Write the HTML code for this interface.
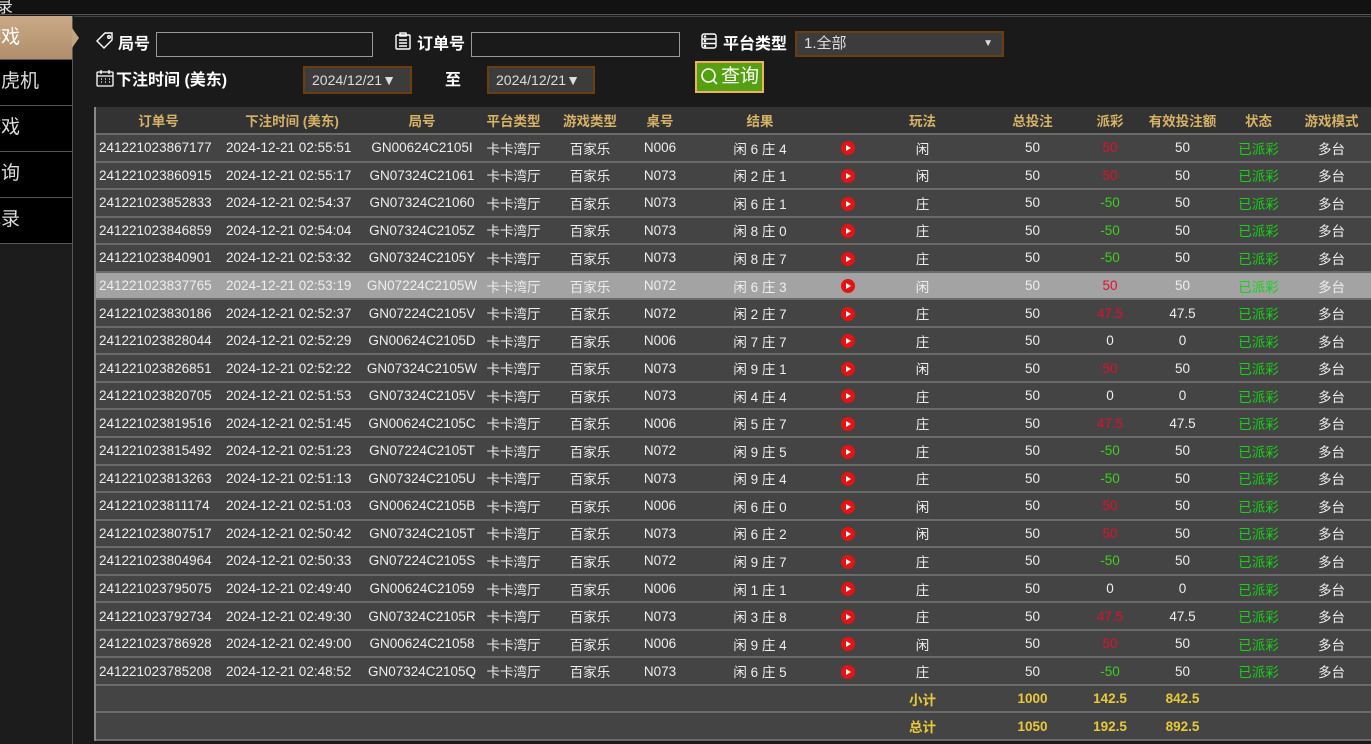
<!DOCTYPE html>
<html><head><meta charset="utf-8"><style>
*{margin:0;padding:0;box-sizing:border-box}
body{width:1371px;height:744px;overflow:hidden;background:#1a1a1a;font-family:"Liberation Sans","Noto Sans CJK SC",sans-serif;color:#fff;position:relative}
.top{position:absolute;left:0;top:0;width:1371px;height:15px;background:#121212;border-bottom:1px solid #555;overflow:hidden}
.side{position:absolute;left:0;top:16px;width:73px;height:728px;background:#1c1c1c;border-right:1px solid #555}
.nav{position:absolute;left:0;width:72px;height:46px;background:#000;border-bottom:1px solid #555;color:#ddd;font-size:19px;line-height:44px;overflow:hidden;white-space:nowrap}
.nav span{position:absolute;left:-18px}
.nav.act{background:linear-gradient(#c9a986,#b08e6c);color:#fff}
.lbl{position:absolute;font-weight:bold;font-size:16px;color:#fff}
.inp{position:absolute;height:25px;border:1px solid #999;background:#1a1a1a}
.dsel{position:absolute;height:28px;border:2px solid #6b3e12;background:#3c3c3c;color:#ddd;font-size:14px;line-height:24px;padding-left:7px}
table{position:absolute;left:95px;top:107px;width:1276px;border-collapse:collapse;font-size:13.5px;table-layout:fixed}
td,th{height:27.55px;border-bottom:2px solid #6a6a6a;text-align:center;white-space:nowrap;overflow:hidden;padding:0}
th{background:#333;color:#d6b266;font-weight:bold;font-size:13.5px;height:27px}
tr{background:#444;color:#eee}
tr.h{background:#a3a3a3}
td.l{text-align:left;padding-left:4px}
.r{color:#e0102a}.g{color:#3ecf1e}.s{color:#16d216}
.y td{color:#e8c93a;font-weight:bold}
.pl{display:inline-block;width:14px;height:14px;border-radius:50%;background:#e51313;position:relative;vertical-align:middle}
.pl:after{content:"";position:absolute;left:5px;top:4px;border-left:5px solid #fff;border-top:3px solid transparent;border-bottom:3px solid transparent}
</style></head><body>
<div class="top"><span style="position:absolute;left:-4px;top:-8px;font-size:17px;color:#ddd">录</span></div>
<div class="side">
<div class="nav act" style="top:0;height:44px"><span>游戏</span></div>
<div style="position:absolute;left:72px;top:12px;border-left:7px solid #c4a380;border-top:10px solid transparent;border-bottom:10px solid transparent"></div>
<div class="nav" style="top:44px"><span>老虎机</span></div>
<div class="nav" style="top:90px"><span>游戏</span></div>
<div class="nav" style="top:136px"><span>查询</span></div>
<div class="nav" style="top:182px"><span>记录</span></div>
</div>
<div style="position:absolute;left:74px;top:16px;right:0;height:1px;background:#444"></div>
<svg style="position:absolute;left:95px;top:31px" width="20" height="20" viewBox="0 0 20 20" fill="none" stroke="#fff" stroke-width="1.4"><path d="M10 2h7v7l-8 8-7-7z"/><circle cx="14" cy="6" r="1.3"/></svg>
<div class="lbl" style="left:118px;top:30px">局号</div>
<div class="inp" style="left:156px;top:32px;width:217px"></div>
<svg style="position:absolute;left:393px;top:31px" width="20" height="20" viewBox="0 0 20 20" fill="none" stroke="#fff" stroke-width="1.4"><rect x="3" y="4" width="14" height="14" rx="1"/><rect x="7" y="2" width="6" height="3"/><path d="M6 9h8M6 12h8M6 15h8"/></svg>
<div class="lbl" style="left:417px;top:30px">订单号</div>
<div class="inp" style="left:471px;top:32px;width:209px"></div>
<svg style="position:absolute;left:699px;top:31px" width="20" height="20" viewBox="0 0 20 20" fill="none" stroke="#fff" stroke-width="1.4"><rect x="3" y="3" width="14" height="14" rx="2"/><path d="M3 8h14M3 12.5h14"/><circle cx="6" cy="5.5" r=".6"/><circle cx="6" cy="10" r=".6"/><circle cx="6" cy="15" r=".6"/></svg>
<div class="lbl" style="left:723px;top:30px">平台类型</div>
<div class="dsel" style="left:795px;top:31px;width:209px;height:26px;line-height:22px;font-size:15px">1.全部<span style="position:absolute;right:9px;font-size:10px">▼</span></div>
<svg style="position:absolute;left:95px;top:68px" width="20" height="20" viewBox="0 0 20 20" fill="none" stroke="#fff" stroke-width="1.3"><rect x="2" y="4" width="16" height="14" rx="1"/><path d="M6 2v4M14 2v4M2 8h16M6 11h1M10 11h1M14 11h1M6 14h1M10 14h1M14 14h1"/></svg>
<div class="lbl" style="left:116px;top:66px">下注时间 (美东)</div>
<div class="dsel" style="left:303px;top:66px;width:109px">2024/12/21▼</div>
<div class="lbl" style="left:445px;top:66px">至</div>
<div class="dsel" style="left:487px;top:66px;width:108px">2024/12/21▼</div>
<div style="position:absolute;left:695px;top:61px;width:69px;height:32px;background:#55a010;border:2px solid #f0b060;font-size:19px;line-height:28px;padding-left:24px">查询</div>
<svg style="position:absolute;left:700px;top:67px" width="19" height="19" viewBox="0 0 19 19" fill="none" stroke="#fff" stroke-width="1.6"><circle cx="8.5" cy="8.5" r="6.5"/><path d="M13 13l4 4"/></svg>
<table>
<colgroup><col style="width:127px"><col style="width:140px"><col style="width:120px"><col style="width:63px"><col style="width:90px"><col style="width:50px"><col style="width:150px"><col style="width:25px"><col style="width:125px"><col style="width:95px"><col style="width:60px"><col style="width:85px"><col style="width:67px"><col style="width:79px"></colgroup>
<tr><th>订单号</th><th>下注时间 (美东)</th><th>局号</th><th>平台类型</th><th>游戏类型</th><th>桌号</th><th>结果</th><th></th><th>玩法</th><th>总投注</th><th>派彩</th><th>有效投注额</th><th>状态</th><th>游戏模式</th></tr>
<tr><td class="l">241221023867177</td><td class="l">2024-12-21 02:55:51</td><td>GN00624C2105I</td><td>卡卡湾厅</td><td>百家乐</td><td>N006</td><td>闲 6 庄 4</td><td><span class="pl"></span></td><td>闲</td><td>50</td><td class="r">50</td><td>50</td><td class="s">已派彩</td><td>多台</td></tr>
<tr><td class="l">241221023860915</td><td class="l">2024-12-21 02:55:17</td><td>GN07324C21061</td><td>卡卡湾厅</td><td>百家乐</td><td>N073</td><td>闲 2 庄 1</td><td><span class="pl"></span></td><td>闲</td><td>50</td><td class="r">50</td><td>50</td><td class="s">已派彩</td><td>多台</td></tr>
<tr><td class="l">241221023852833</td><td class="l">2024-12-21 02:54:37</td><td>GN07324C21060</td><td>卡卡湾厅</td><td>百家乐</td><td>N073</td><td>闲 6 庄 1</td><td><span class="pl"></span></td><td>庄</td><td>50</td><td class="g">-50</td><td>50</td><td class="s">已派彩</td><td>多台</td></tr>
<tr><td class="l">241221023846859</td><td class="l">2024-12-21 02:54:04</td><td>GN07324C2105Z</td><td>卡卡湾厅</td><td>百家乐</td><td>N073</td><td>闲 8 庄 0</td><td><span class="pl"></span></td><td>庄</td><td>50</td><td class="g">-50</td><td>50</td><td class="s">已派彩</td><td>多台</td></tr>
<tr><td class="l">241221023840901</td><td class="l">2024-12-21 02:53:32</td><td>GN07324C2105Y</td><td>卡卡湾厅</td><td>百家乐</td><td>N073</td><td>闲 8 庄 7</td><td><span class="pl"></span></td><td>庄</td><td>50</td><td class="g">-50</td><td>50</td><td class="s">已派彩</td><td>多台</td></tr>
<tr class="h"><td class="l">241221023837765</td><td class="l">2024-12-21 02:53:19</td><td>GN07224C2105W</td><td>卡卡湾厅</td><td>百家乐</td><td>N072</td><td>闲 6 庄 3</td><td><span class="pl"></span></td><td>闲</td><td>50</td><td class="r">50</td><td>50</td><td class="s">已派彩</td><td>多台</td></tr>
<tr><td class="l">241221023830186</td><td class="l">2024-12-21 02:52:37</td><td>GN07224C2105V</td><td>卡卡湾厅</td><td>百家乐</td><td>N072</td><td>闲 2 庄 7</td><td><span class="pl"></span></td><td>庄</td><td>50</td><td class="r">47.5</td><td>47.5</td><td class="s">已派彩</td><td>多台</td></tr>
<tr><td class="l">241221023828044</td><td class="l">2024-12-21 02:52:29</td><td>GN00624C2105D</td><td>卡卡湾厅</td><td>百家乐</td><td>N006</td><td>闲 7 庄 7</td><td><span class="pl"></span></td><td>庄</td><td>50</td><td>0</td><td>0</td><td class="s">已派彩</td><td>多台</td></tr>
<tr><td class="l">241221023826851</td><td class="l">2024-12-21 02:52:22</td><td>GN07324C2105W</td><td>卡卡湾厅</td><td>百家乐</td><td>N073</td><td>闲 9 庄 1</td><td><span class="pl"></span></td><td>闲</td><td>50</td><td class="r">50</td><td>50</td><td class="s">已派彩</td><td>多台</td></tr>
<tr><td class="l">241221023820705</td><td class="l">2024-12-21 02:51:53</td><td>GN07324C2105V</td><td>卡卡湾厅</td><td>百家乐</td><td>N073</td><td>闲 4 庄 4</td><td><span class="pl"></span></td><td>庄</td><td>50</td><td>0</td><td>0</td><td class="s">已派彩</td><td>多台</td></tr>
<tr><td class="l">241221023819516</td><td class="l">2024-12-21 02:51:45</td><td>GN00624C2105C</td><td>卡卡湾厅</td><td>百家乐</td><td>N006</td><td>闲 5 庄 7</td><td><span class="pl"></span></td><td>庄</td><td>50</td><td class="r">47.5</td><td>47.5</td><td class="s">已派彩</td><td>多台</td></tr>
<tr><td class="l">241221023815492</td><td class="l">2024-12-21 02:51:23</td><td>GN07224C2105T</td><td>卡卡湾厅</td><td>百家乐</td><td>N072</td><td>闲 9 庄 5</td><td><span class="pl"></span></td><td>庄</td><td>50</td><td class="g">-50</td><td>50</td><td class="s">已派彩</td><td>多台</td></tr>
<tr><td class="l">241221023813263</td><td class="l">2024-12-21 02:51:13</td><td>GN07324C2105U</td><td>卡卡湾厅</td><td>百家乐</td><td>N073</td><td>闲 9 庄 4</td><td><span class="pl"></span></td><td>庄</td><td>50</td><td class="g">-50</td><td>50</td><td class="s">已派彩</td><td>多台</td></tr>
<tr><td class="l">241221023811174</td><td class="l">2024-12-21 02:51:03</td><td>GN00624C2105B</td><td>卡卡湾厅</td><td>百家乐</td><td>N006</td><td>闲 6 庄 0</td><td><span class="pl"></span></td><td>闲</td><td>50</td><td class="r">50</td><td>50</td><td class="s">已派彩</td><td>多台</td></tr>
<tr><td class="l">241221023807517</td><td class="l">2024-12-21 02:50:42</td><td>GN07324C2105T</td><td>卡卡湾厅</td><td>百家乐</td><td>N073</td><td>闲 6 庄 2</td><td><span class="pl"></span></td><td>闲</td><td>50</td><td class="r">50</td><td>50</td><td class="s">已派彩</td><td>多台</td></tr>
<tr><td class="l">241221023804964</td><td class="l">2024-12-21 02:50:33</td><td>GN07224C2105S</td><td>卡卡湾厅</td><td>百家乐</td><td>N072</td><td>闲 9 庄 7</td><td><span class="pl"></span></td><td>庄</td><td>50</td><td class="g">-50</td><td>50</td><td class="s">已派彩</td><td>多台</td></tr>
<tr><td class="l">241221023795075</td><td class="l">2024-12-21 02:49:40</td><td>GN00624C21059</td><td>卡卡湾厅</td><td>百家乐</td><td>N006</td><td>闲 1 庄 1</td><td><span class="pl"></span></td><td>庄</td><td>50</td><td>0</td><td>0</td><td class="s">已派彩</td><td>多台</td></tr>
<tr><td class="l">241221023792734</td><td class="l">2024-12-21 02:49:30</td><td>GN07324C2105R</td><td>卡卡湾厅</td><td>百家乐</td><td>N073</td><td>闲 3 庄 8</td><td><span class="pl"></span></td><td>庄</td><td>50</td><td class="r">47.5</td><td>47.5</td><td class="s">已派彩</td><td>多台</td></tr>
<tr><td class="l">241221023786928</td><td class="l">2024-12-21 02:49:00</td><td>GN00624C21058</td><td>卡卡湾厅</td><td>百家乐</td><td>N006</td><td>闲 9 庄 4</td><td><span class="pl"></span></td><td>闲</td><td>50</td><td class="r">50</td><td>50</td><td class="s">已派彩</td><td>多台</td></tr>
<tr><td class="l">241221023785208</td><td class="l">2024-12-21 02:48:52</td><td>GN07324C2105Q</td><td>卡卡湾厅</td><td>百家乐</td><td>N073</td><td>闲 6 庄 5</td><td><span class="pl"></span></td><td>庄</td><td>50</td><td class="g">-50</td><td>50</td><td class="s">已派彩</td><td>多台</td></tr>
<tr class="y"><td></td><td></td><td></td><td></td><td></td><td></td><td></td><td></td><td>小计</td><td>1000</td><td>142.5</td><td>842.5</td><td></td><td></td></tr>
<tr class="y"><td></td><td></td><td></td><td></td><td></td><td></td><td></td><td></td><td>总计</td><td>1050</td><td>192.5</td><td>892.5</td><td></td><td></td></tr>
</table>
<div style="position:absolute;left:94px;top:107px;width:2px;height:634px;background:#888"></div>
</body></html>
